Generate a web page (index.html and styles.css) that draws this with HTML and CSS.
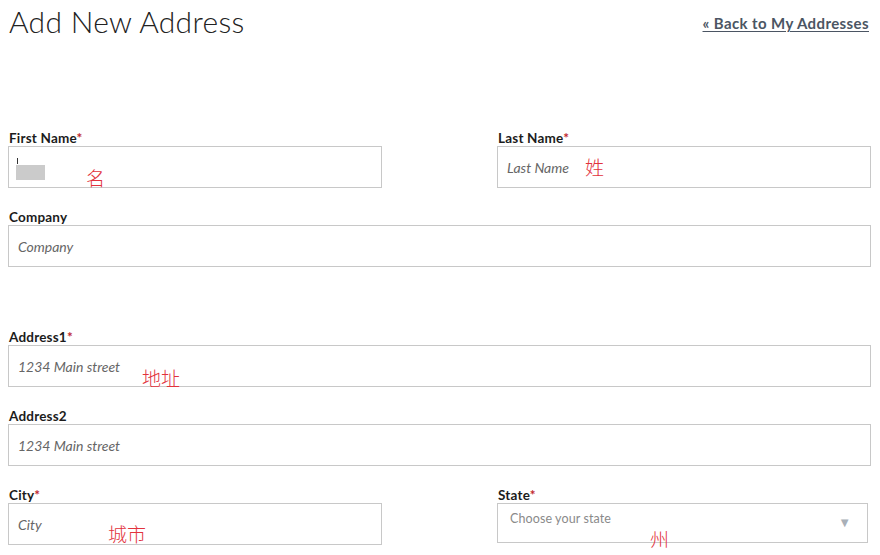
FILE: index.html
```html
<!DOCTYPE html>
<html lang="en">
<head>
  <meta charset="UTF-8">
  <title>Add New Address</title>
  <link rel="stylesheet" href="styles.css">
</head>
<body>
<div class="page">
  <div class="page-header">
    <h1 class="page-title">Add New Address</h1>
    <a class="back-link" href="#">&laquo; Back to My Addresses</a>
  </div>

  <form class="address-form">
    <div class="form-row two-col">
      <div class="field">
        <label>First Name<span class="req">*</span></label>
        <div class="input-box filled">
          <span class="caret"></span>
          <span class="redacted"></span>
        </div>
        <span class="note note-first">名</span>
      </div>
      <div class="field">
        <label>Last Name<span class="req">*</span></label>
        <div class="input-box"><span class="placeholder">Last Name</span></div>
        <span class="note note-last">姓</span>
      </div>
    </div>

    <div class="form-row">
      <div class="field">
        <label>Company</label>
        <div class="input-box"><span class="placeholder">Company</span></div>
      </div>
    </div>

    <div class="form-row section-start">
      <div class="field">
        <label>Address1<span class="req">*</span></label>
        <div class="input-box"><span class="placeholder">1234 Main street</span></div>
        <span class="note note-addr">地址</span>
      </div>
    </div>

    <div class="form-row">
      <div class="field">
        <label>Address2</label>
        <div class="input-box"><span class="placeholder">1234 Main street</span></div>
      </div>
    </div>

    <div class="form-row two-col">
      <div class="field">
        <label>City<span class="req">*</span></label>
        <div class="input-box"><span class="placeholder">City</span></div>
        <span class="note note-city">城市</span>
      </div>
      <div class="field">
        <label>State<span class="req">*</span></label>
        <div class="select-box">
          <span class="select-text">Choose your state</span>
          <span class="select-arrow">&#9660;</span>
        </div>
        <span class="note note-state">州</span>
      </div>
    </div>
  </form>
</div>
</body>
</html>
```

FILE: styles.css
```css
html, body {
    margin: 0;
    padding: 0;
    background: #fff;
    overflow: hidden;
}

body {
    font-family: Lato, "Open Sans", "Liberation Sans", sans-serif;
    color: #1c1c1c;
}

.page {
    padding: 0 9px 0 8px;
}

/* header */
.page-header {
    display: flex;
    justify-content: space-between;
    align-items: flex-start;
    height: 130px;
}

.page-title {
    margin: 3px 0 0 1px;
    font-size: 30px;
    font-weight: 300;
    line-height: 36px;
    color: #222;
    letter-spacing: 0.3px;
}

.back-link {
    margin-top: 14px;
    margin-right: 2px;
    font-size: 15px;
    font-weight: 700;
    color: #4b5563;
    letter-spacing: 0.4px;
    text-decoration: underline;
    text-underline-offset: 2px;
}

/* form */
.form-row {
    margin-bottom: 21px;
}

.form-row.section-start {
    margin-top: 62px;
}

.two-col {
    display: grid;
    grid-template-columns: 374px 374px;
    justify-content: space-between;
}

.field {
    position: relative;
}

.field label {
    display: block;
    height: 16px;
    line-height: 16px;
    padding-left: 1px;
    font-size: 13.5px;
    font-weight: 700;
    letter-spacing: 0.2px;
    color: #1c1c1c;
}

.req {
    color: #c0272d;
}

.input-box {
    box-sizing: border-box;
    height: 42px;
    border: 1px solid #c8c8c8;
    display: flex;
    align-items: center;
    padding-left: 9px;
    position: relative;
}

.placeholder {
    font-size: 14px;
    font-style: italic;
    color: #666;
}

.filled .caret {
    position: absolute;
    left: 8px;
    top: 11px;
    width: 1px;
    height: 6px;
    background: #333;
}

.filled .redacted {
    position: absolute;
    left: 7px;
    top: 18px;
    width: 29px;
    height: 15px;
    background: #cbcbcb;
}

.select-box {
    box-sizing: border-box;
    width: 371px;
    height: 40px;
    border: 1px solid #c8c8c8;
    display: flex;
    justify-content: space-between;
    padding: 7px 16px 0 12px;
}

.select-text {
    font-size: 12.5px;
    color: #8a8a8a;
    letter-spacing: 0.1px;
}

.select-arrow {
    font-size: 13px;
    color: #a9b0b8;
    margin-top: 3px;
}

/* red annotations over the screenshot */
.note {
    position: absolute;
    font-family: "Noto Sans CJK SC", sans-serif;
    font-size: 19px;
    line-height: 20px;
    color: #e2323c;
    font-weight: 300;
}

.note-first { left: 78px; top: 38px; }
.note-last  { left: 88px; top: 27px; }
.note-addr  { left: 134px; top: 39px; }
.note-city  { left: 100px; top: 37px; }
.note-state { left: 153px; top: 42px; }
```
